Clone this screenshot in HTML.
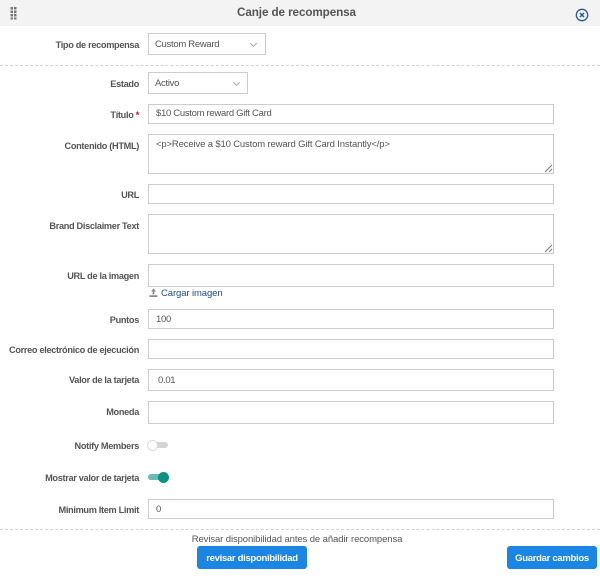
<!DOCTYPE html>
<html lang="es">
<head>
<meta charset="utf-8">
<title>Canje de recompensa</title>
<style>
html,body{margin:0;padding:0;background:#fff;}
#p{position:relative;width:600px;height:578px;overflow:hidden;background:#fff;font-family:"Liberation Sans",sans-serif;color:#555;}
#p>*{position:absolute;box-sizing:border-box;}
.h{left:0;top:0;width:600px;height:26px;background:#f3f3f3;}
.t{left:0;top:5px;width:593px;text-align:center;font-size:11.7px;font-weight:bold;color:#555;line-height:16px;letter-spacing:-.1px;}
.l{right:461px;font-size:9.2px;font-weight:bold;color:#555;line-height:12px;white-space:nowrap;text-align:right;letter-spacing:-.32px;}
.i{left:148px;width:406px;border:1px solid #ccc;background:#fff;font-size:9.5px;line-height:18px;padding-left:7px;color:#555;white-space:nowrap;letter-spacing:-.3px;}
.d{left:0;width:600px;height:0;border-top:1px dashed #d4d4d4;}
.c{border:solid #aaa;border-width:0 1px 1px 0;width:5px;height:5px;transform:rotate(45deg);}
.b{background:#1b85e4;color:#fff;font-size:9.5px;font-weight:bold;text-align:center;border-radius:3px;line-height:25px;height:23px;letter-spacing:-.3px;}
</style>
</head>
<body>
<div id="p">
<div class="h"></div>
<svg style="left:10px;top:7px" width="8" height="13" viewBox="0 0 8 13"><g fill="#777"><rect x="0.5" y="0" width="2.5" height="2.5"/><rect x="4" y="0" width="2.5" height="2.5"/><rect x="0.5" y="3.5" width="2.5" height="2.5"/><rect x="4" y="3.5" width="2.5" height="2.5"/><rect x="0.5" y="7" width="2.5" height="2.5"/><rect x="4" y="7" width="2.5" height="2.5"/><rect x="0.5" y="10.5" width="2.5" height="2"/><rect x="4" y="10.5" width="2.5" height="2"/></g></svg>
<div class="t">Canje de recompensa</div>
<svg style="left:575px;top:8px" width="14" height="14" viewBox="0 0 14 14"><circle cx="7" cy="7" r="5.7" fill="none" stroke="#2a5a9c" stroke-width="1.3"/><path d="M5 5l4 4M9 5l-4 4" stroke="#2a5a9c" stroke-width="1.5" fill="none"/></svg>

<div class="l" style="top:39px">Tipo de recompensa</div>
<div class="i" style="top:33px;width:118px;height:22px;line-height:22px;padding-left:6px">Custom Reward</div>
<div class="c" style="left:251px;top:41px"></div>
<div class="d" style="top:65px"></div>

<div class="l" style="top:78px">Estado</div>
<div class="i" style="top:72px;width:100px;height:22px;line-height:22px;padding-left:6px">Activo</div>
<div class="c" style="left:234px;top:80px"></div>

<div class="l" style="top:109px">Título <span style="color:#c8102e">*</span></div>
<div class="i" style="top:104px;height:20px">$10 Custom reward Gift Card</div>

<div class="l" style="top:140px">Contenido (HTML)</div>
<div class="i" style="top:134px;height:40px;line-height:20px;letter-spacing:-.15px">&lt;p&gt;Receive a $10 Custom reward Gift Card Instantly&lt;/p&gt;</div>
<svg style="left:544px;top:164px" width="9" height="9" viewBox="0 0 9 9"><path d="M1 8L8 1M5 8L8 5" stroke="#777" stroke-width="1" fill="none"/></svg>

<div class="l" style="top:189px">URL</div>
<div class="i" style="top:184px;height:20px"></div>

<div class="l" style="top:220px">Brand Disclaimer Text</div>
<div class="i" style="top:214px;height:40px"></div>
<svg style="left:544px;top:244px" width="9" height="9" viewBox="0 0 9 9"><path d="M1 8L8 1M5 8L8 5" stroke="#777" stroke-width="1" fill="none"/></svg>

<div class="l" style="top:270px">URL de la imagen</div>
<div class="i" style="top:264px;height:23px"></div>
<svg style="left:149px;top:288px" width="9" height="10" viewBox="0 0 9 10"><path d="M4.5 0.5L2 3.4h1.6v3h1.8v-3H7zM0.5 7.2v1.8h8V7.2" fill="#888"/></svg>
<div style="left:161px;top:288px;font-size:9.5px;line-height:12px;color:#1f4e8c;white-space:nowrap;letter-spacing:-.1px">Cargar imagen</div>

<div class="l" style="top:314px">Puntos</div>
<div class="i" style="top:309px;height:20px;line-height:20px">100</div>

<div class="l" style="top:344px">Correo electrónico de ejecución</div>
<div class="i" style="top:339px;height:20px"></div>

<div class="l" style="top:374px">Valor de la tarjeta</div>
<div class="i" style="top:369px;height:22px;line-height:22px;padding-left:9px">0.01</div>

<div class="l" style="top:406px">Moneda</div>
<div class="i" style="top:401px;height:23px"></div>

<div class="l" style="top:440px">Notify Members</div>
<div style="left:150px;top:442px;width:18px;height:6px;border-radius:3px;background:#d4d4d4"></div>
<div style="left:147px;top:440px;width:11px;height:11px;border-radius:50%;background:#fff;border:1px solid #ddd"></div>

<div class="l" style="top:472px">Mostrar valor de tarjeta</div>
<div style="left:148px;top:474px;width:19px;height:6px;border-radius:3px;background:#6bbcae"></div>
<div style="left:158px;top:472px;width:11px;height:11px;border-radius:50%;background:#0f917f"></div>

<div class="l" style="top:504px">Minimum Item Limit</div>
<div class="i" style="top:499px;height:20px;line-height:20px">0</div>

<div class="d" style="top:529px"></div>
<div style="left:0;top:534px;width:594px;text-align:center;font-size:9.5px;line-height:12px;color:#555;letter-spacing:-.1px">Revisar disponibilidad antes de añadir recompensa</div>
<div class="b" style="left:197px;top:546px;width:110px">revisar disponibilidad</div>
<div class="b" style="left:507px;top:546px;width:90px">Guardar cambios</div>
</div>
</body>
</html>
